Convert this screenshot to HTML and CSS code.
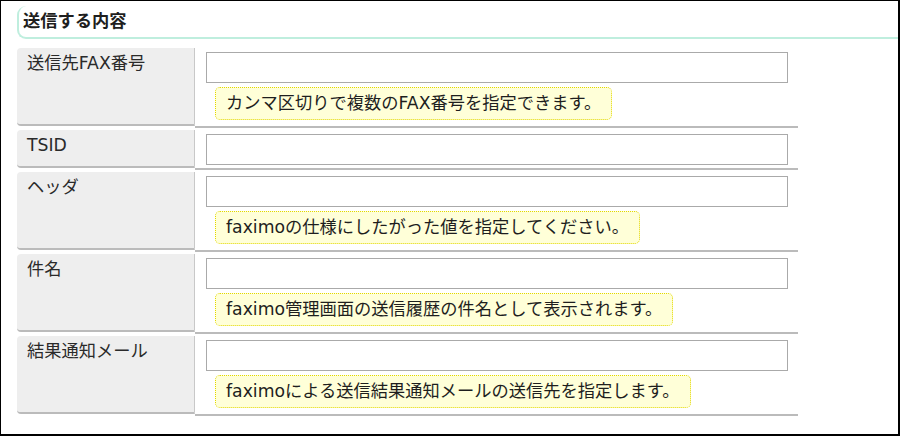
FILE: index.html
```html
<!DOCTYPE html>
<html lang="ja">
<head>
<meta charset="utf-8">
<title>送信する内容</title>
<link rel="stylesheet" href="styles.css">
</head>
<body>
<div class="frame">
  <h2 class="section-title">送信する内容</h2>
  <div class="form-rows">
    <div class="form-row">
      <div class="form-label">送信先FAX番号</div>
      <div class="form-value">
        <input class="text-input" type="text">
        <div class="hint">カンマ区切りで複数のFAX番号を指定できます。</div>
      </div>
    </div>
    <div class="form-row">
      <div class="form-label">TSID</div>
      <div class="form-value">
        <input class="text-input" type="text">
      </div>
    </div>
    <div class="form-row">
      <div class="form-label">ヘッダ</div>
      <div class="form-value">
        <input class="text-input" type="text">
        <div class="hint">faximoの仕様にしたがった値を指定してください。</div>
      </div>
    </div>
    <div class="form-row">
      <div class="form-label">件名</div>
      <div class="form-value">
        <input class="text-input" type="text">
        <div class="hint">faximo管理画面の送信履歴の件名として表示されます。</div>
      </div>
    </div>
    <div class="form-row">
      <div class="form-label">結果通知メール</div>
      <div class="form-value">
        <input class="text-input" type="text">
        <div class="hint">faximoによる送信結果通知メールの送信先を指定します。</div>
      </div>
    </div>
  </div>
</div>
</body>
</html>
```
FILE: styles.css
```css
html, body {
  margin: 0;
  padding: 0;
  background: #fff;
}

body {
  font-family: "DejaVu Sans", "Noto Sans CJK JP", sans-serif;
  font-size: 17.25px;
  color: #2a2a2a;
}

.frame {
  box-sizing: border-box;
  width: 900px;
  height: 436px;
  border: 1px solid #000;
  border-right-width: 2px;
  border-bottom-width: 2px;
  padding: 5px 0 0 16px;
}

.section-title {
  margin: 0;
  height: 31px;
  line-height: 31px;
  padding-left: 4px;
  font-size: 17.25px;
  font-weight: bold;
  color: #1e1e1e;
  border-left: 2px solid #bfeede;
  border-bottom: 2px solid #bfeede;
  border-radius: 9px 0 0 9px;
}

.form-rows {
  width: 781px;
  margin-top: 9px;
  display: flex;
  flex-direction: column;
  gap: 4px;
}

.form-row {
  display: flex;
}

.form-label {
  box-sizing: border-box;
  width: 178px;
  flex: none;
  padding: 3px 10px 4px;
  line-height: 24px;
  background: #eee;
  border-right: 1px solid #c8c8c8;
  border-bottom: 2px solid #bbb;
  border-radius: 4px 0 0 4px;
}

.form-value {
  flex: 1;
  padding: 3px 9px 6px 11px;
  border-bottom: 2px solid #bbb;
  margin-bottom: -1px;
  position: relative;
  top: 1px;
  display: flex;
  flex-direction: column;
  align-items: flex-start;
}

.form-row:nth-child(2) .form-value {
  padding-bottom: 3px;
}

.text-input {
  box-sizing: border-box;
  width: 582px;
  height: 31px;
  margin: 0;
  border: 1px solid #aaa;
  background: #fff;
  font: inherit;
}

.hint {
  margin: 4px 0 0 9px;
  height: 33px;
  box-sizing: border-box;
  padding: 0 10px;
  line-height: 31px;
  background: #ffffd8;
  border: 1px dotted #e2d800;
  border-radius: 5px;
  color: #1e1e1e;
  white-space: nowrap;
}
```
